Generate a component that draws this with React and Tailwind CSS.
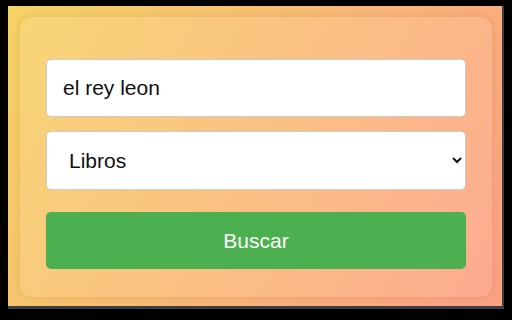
import { useState } from "react";

export default function App() {
    const [query, setQuery] = useState("el rey leon");
    const [type, setType] = useState("libros");

    return (
        <div className="w-[512px] h-[320px] bg-black pl-[8px] pt-[6px] overflow-hidden">
            <div
                className="w-[496px] h-[303px] border-r-[2px] border-b-[3px] border-[#3a3f45] bg-[linear-gradient(120deg,#f6d365_0%,#fda085_100%)] pl-[12px] pt-[11px]"
                style={{fontFamily: '"Liberation Sans", Arial, sans-serif'}}
            >
                <div className="w-[472px] h-[280px] rounded-[12px] bg-white/10 shadow-[0_0_10px_rgba(0,0,0,0.1)] px-[26px] pt-[42px] flex flex-col">
                    <input
                        value={query}
                        onChange={e => setQuery(e.target.value)}
                        className="w-full h-[58px] bg-white border border-[#ccc] rounded-[5px] px-[16px] text-[21px] text-[#111] outline-none"
                    />
                    <select
                        value={type}
                        onChange={e => setType(e.target.value)}
                        className="mt-[14px] w-full h-[59px] bg-white border border-[#ccc] rounded-[5px] pl-[18px] pr-[4px] text-[21px] text-[#111] outline-none"
                    >
                        <option value="libros">Libros</option>
                        <option value="peliculas">Películas</option>
                        <option value="musica">Música</option>
                    </select>
                    <button className="mt-[22px] w-full h-[57px] bg-[#4caf50] rounded-[5px] text-white text-[21px]">
                        Buscar
                    </button>
                </div>
            </div>
        </div>
    );
}
